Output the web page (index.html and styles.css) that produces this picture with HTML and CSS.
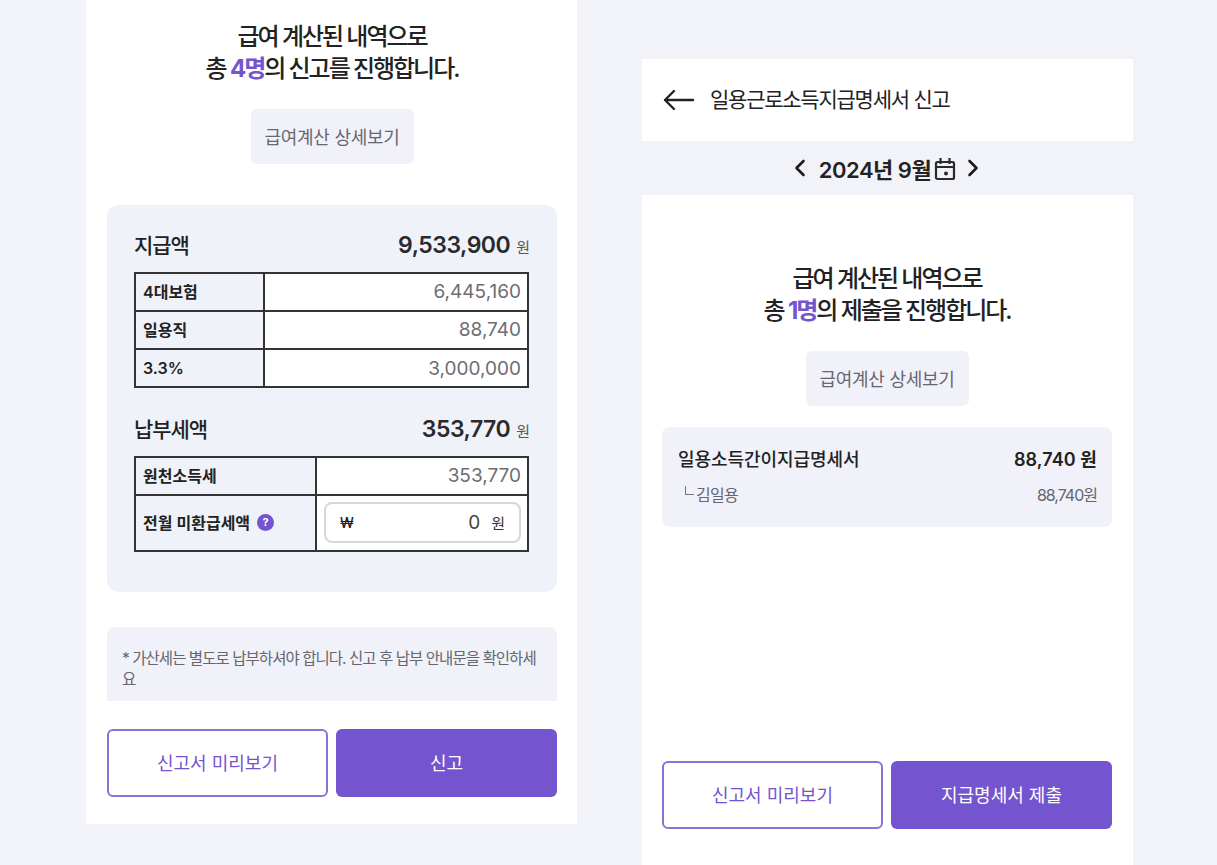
FILE: index.html
```html
<!DOCTYPE html>
<html lang="ko">
<head>
<meta charset="utf-8">
<title>신고</title>
<link rel="stylesheet" href="styles.css">
</head>
<body>
<main class="page">
  <section class="phone phone-left">
    <h1 class="headline">급여 계산된 내역으로<br>총 <em>4명</em>의 신고를 진행합니다.</h1>
    <button class="detail-btn">급여계산 상세보기</button>
    <div class="summary">
      <div class="sum-head"><span class="sum-title">지급액</span><span class="sum-val">9,533,900<small>원</small></span></div>
      <div class="tbl tbl-a">
        <div class="th">4대보험</div><div class="td">6,445,160</div>
        <div class="th">일용직</div><div class="td">88,740</div>
        <div class="th">3.3%</div><div class="td">3,000,000</div>
      </div>
      <div class="sum-head sum-head-2"><span class="sum-title">납부세액</span><span class="sum-val">353,770<small>원</small></span></div>
      <div class="tbl tbl-b">
        <div class="th">원천소득세</div><div class="td">353,770</div>
        <div class="th th-tall">전월 미환급세액<span class="help">?</span></div>
        <div class="td td-input"><div class="input"><span class="won-sign">₩</span><span class="input-val">0</span><span class="input-unit">원</span></div></div>
      </div>
    </div>
    <div class="notice">* 가산세는 별도로 납부하셔야 합니다. 신고 후 납부 안내문을 확인하세요</div>
    <div class="actions actions-left">
      <button class="btn btn-outline">신고서 미리보기</button>
      <button class="btn btn-solid">신고</button>
    </div>
  </section>

  <section class="phone-right">
    <header class="topbar">
      <svg class="back" width="32" height="24" viewBox="0 0 32 24" fill="none" stroke="#222" stroke-width="2.4" stroke-linecap="round" stroke-linejoin="round"><path d="M2 12h28M11 3l-9 9 9 9"/></svg>
      <span class="topbar-title">일용근로소득지급명세서 신고</span>
    </header>
    <div class="datebar">
      <svg width="12" height="18" viewBox="0 0 12 18" fill="none" stroke="#1c1c1e" stroke-width="2.6" stroke-linecap="round" stroke-linejoin="round"><path d="M9.500 2L2.500 9l7 7"/></svg>
      <span class="date">2024년 9월</span>
      <svg class="cal" width="22" height="24" viewBox="0 0 22 24" fill="none" stroke="#2a2a2c" stroke-width="2.200"><rect x="2" y="5" width="18" height="17" rx="1.500"/><path d="M2 10h18M6.500 1v6M15.500 1v6"/><circle cx="12" cy="16.500" r="2" fill="#2a2a2c" stroke="none"/></svg>
      <svg class="next" width="12" height="18" viewBox="0 0 12 18" fill="none" stroke="#1c1c1e" stroke-width="2.6" stroke-linecap="round" stroke-linejoin="round"><path d="M2.500 2l7 7-7 7"/></svg>
    </div>
    <div class="phone-body">
      <h1 class="headline">급여 계산된 내역으로<br>총 <em>1명</em>의 제출을 진행합니다.</h1>
      <button class="detail-btn">급여계산 상세보기</button>
      <div class="statement">
        <div class="st-row"><span class="st-name">일용소득간이지급명세서</span><span class="st-val">88,740 원</span></div>
        <div class="st-row st-sub"><span class="st-person"><i class="corner"></i>김일용</span><span class="st-subval">88,740원</span></div>
      </div>
      <div class="actions actions-right">
        <button class="btn btn-outline">신고서 미리보기</button>
        <button class="btn btn-solid">지급명세서 제출</button>
      </div>
    </div>
  </section>
</main>
</body>
</html>
```
FILE: styles.css
```css
* { box-sizing: border-box; }
html, body { margin: 0; padding: 0; }
body {
  width: 1217px;
  height: 865px;
  overflow: hidden;
  background: #f2f3f8;
  color: #222;
  font-family: Inter, "Noto Sans CJK KR", sans-serif;
}
button { font-family: inherit; border: 0; cursor: pointer; }
.page { display: flex; align-items: flex-start; gap: 65px; padding-left: 86px; height: 865px; }

.phone { width: 491px; height: 824px; background: #fff; display: flex; flex-direction: column; padding: 21px 20px 0 21px; }
.phone-left { align-items: flex-start; }

.headline {
  margin: 0;
  width: 100%;
  text-align: center;
  font-size: 24px;
  line-height: 32px;
  font-weight: 500;
  letter-spacing: -2.050px;
  color: #222;
}
.headline em { font-style: normal; font-weight: 700; color: #7454cf; }

.detail-btn {
  display: block;
  width: 163px;
  height: 55px;
  margin: 24px auto 0;
  padding: 0 0 2px;
  background: #f1f2f9;
  border-radius: 6px;
  color: #67676f;
  font-size: 18px;
  letter-spacing: -0.3px;
}

.summary { width: 450px; height: 387px; margin-top: 41px; background: #f0f2fa; border-radius: 12px; padding: 23px 27px 0; }
.sum-head { display: flex; justify-content: space-between; align-items: center; height: 34px; }
.sum-head-2 { margin-top: 24px; }
.sum-title { font-size: 21px; font-weight: 500; letter-spacing: -1.1px; color: #222; padding-bottom: 3px; }
.sum-val { font-size: 23px; font-weight: 600; letter-spacing: -0.5px; color: #2a2a2c; display: flex; align-items: baseline; }
.sum-val small { font-size: 15px; font-weight: 400; letter-spacing: 0; color: #55555c; margin-left: 6px; }

.tbl { display: grid; margin-top: 10px; width: 395px; border: 2px solid #333; background: #fff; }
.tbl-a { grid-template-columns: 129px 1fr; grid-template-rows: 38px 38px 36px; }
.tbl-b { grid-template-columns: 181px 1fr; grid-template-rows: 38px 54px; }
.th {
  display: flex; align-items: center;
  padding: 0 0 2px 7px;
  background: #f0f2fa;
  border-right: 2px solid #333;
  border-bottom: 2px solid #333;
  font-size: 16px; font-weight: 600; letter-spacing: 0; color: #222;
}
.td {
  display: flex; align-items: center; justify-content: flex-end;
  padding: 0 6px 2px 0;
  border-bottom: 2px solid #333;
  font-size: 19px; color: #6d6d73; letter-spacing: 0;
}
.tbl > :nth-last-child(-n+2) { border-bottom: 0; }
.tbl-a > :nth-last-child(-n+2) { padding-bottom: 0; }
.help {
  display: inline-flex; align-items: center; justify-content: center;
  width: 17px; height: 17px; margin-left: 7px;
  border-radius: 50%;
  background: #7454cf; color: #fff;
  font-size: 11px; font-weight: 700;
}
.input {
  display: flex; align-items: center;
  width: 197px; height: 41px;
  background: #fff;
  border: 2px solid #d6d6e0;
  border-radius: 8px;
  padding: 0 14px;
  color: #333;
}
.won-sign { font-size: 14px; font-weight: 500; color: #222; }
.input-val { margin-left: auto; font-size: 19px; color: #444; }
.input-unit { margin-left: 11px; font-size: 15px; color: #333; }

.notice {
  width: 450px; height: 74px; margin-top: 35px;
  padding: 21px 15px 0;
  background: #f0f1f9;
  border-radius: 8px 8px 0 0;
  font-size: 15.500px;
  line-height: 21px;
  letter-spacing: -0.95px;
  color: #66666e;
  word-break: break-all;
}

.actions { display: flex; gap: 8px; width: 450px; }
.actions-left { margin-top: 28px; }
.actions-right { margin-top: auto; margin-bottom: 36px; }
.btn { flex: 0 0 221px; height: 68px; padding: 0 0 2px; border-radius: 6px; font-size: 18px; letter-spacing: 0; }
.btn-outline { background: #fff; border: 2px solid #8a72d9; color: #7454cf; }
.btn-solid { background: #7454cf; color: #fff; }

.phone-right { width: 491px; margin-top: 59px; height: 806px; display: flex; flex-direction: column; }
.topbar { height: 82px; background: #fff; display: flex; align-items: center; padding-left: 21px; gap: 15px; }
.topbar-title { font-size: 21px; font-weight: 400; letter-spacing: -1.25px; color: #222; padding-bottom: 4px; }
.datebar { height: 54px; display: flex; align-items: center; justify-content: center; padding-right: 2px; }
.date { margin-left: 13px; font-size: 22px; font-weight: 600; letter-spacing: -0.5px; color: #222; }
.cal { margin: 2px 0 0 3px; }
.next { margin-left: 11px; }
.phone-body { flex: 1; background: #fff; display: flex; flex-direction: column; padding: 68px 21px 0 20px; }
.statement { width: 450px; height: 100px; margin-top: 21px; background: #f0f1f9; border-radius: 8px; padding: 15px 15px 0 16px; }
.st-row { display: flex; justify-content: space-between; align-items: center; height: 32px; }
.st-name { font-size: 18px; font-weight: 500; letter-spacing: -0.05px; color: #222; }
.st-val { font-size: 18px; font-weight: 600; letter-spacing: 0.1px; color: #222; }
.st-sub { margin-top: 4px; }
.st-person { display: flex; align-items: center; font-size: 16px; letter-spacing: -0.7px; color: #66666e; }
.corner { display: block; width: 9px; height: 9px; margin: -8px 2px 0 7px; border-left: 1px solid #777; border-bottom: 1px solid #777; }
.st-subval { font-size: 16px; letter-spacing: -1px; color: #66666e; }
```
